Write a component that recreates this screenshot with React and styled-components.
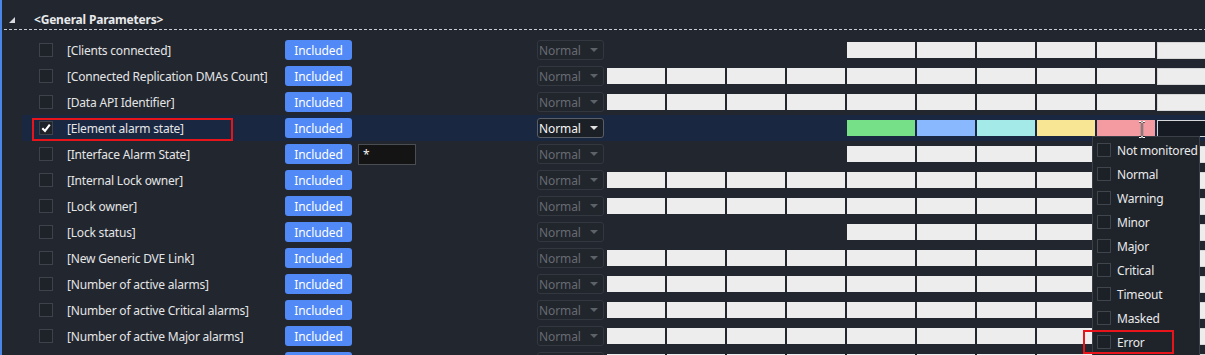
import React from "react";
import styled, { createGlobalStyle } from "styled-components";

const Global = createGlobalStyle`
  html, body { margin: 0; padding: 0; background: #22262e; overflow: hidden; }
  body { font-family: "Noto Sans", "Open Sans", sans-serif; }
`;

const Page = styled.div`
  position: relative;
  height: 355px;
  overflow: hidden;
  background: #22262e;
  border-left: 2px solid #4a86e8;
  display: flex;
  flex-direction: column;
`;

const GroupHeader = styled.div`
  flex: none;
  display: flex;
  align-items: center;
  height: 30px;
  padding-left: 5px;
  margin-left: 2px;
  gap: 19px;
  background-image: repeating-linear-gradient(to right, #c9ccd1 0 3px, transparent 3px 5px);
  background-size: 100% 1px;
  background-repeat: no-repeat;
  background-position: 0 100%;
  padding-top: 10px;
  padding-bottom: 1px;
  box-sizing: border-box;
`;

const Title = styled.span`
  color: #e8e9eb;
  font-size: 12px;
  font-weight: 700;
  letter-spacing: -0.2px;
  line-height: 16px;
`;

const Rows = styled.div`
  flex: none;
  display: flex;
  flex-direction: column;
  padding-top: 7px;
  padding-left: 20px;
`;

const Row = styled.div`
  display: flex;
  align-items: center;
  height: 26px;
  flex: none;
  padding-left: 17px;
  background: ${(p) => (p.$selected ? "#1a2741" : "transparent")};
`;

const Check = styled.span`
  width: 14px;
  height: 14px;
  box-sizing: border-box;
  border: 1px solid #3d424b;
  background: #1e2229;
  flex: none;
  margin-right: 14px;
  display: flex;
  align-items: center;
  justify-content: center;
`;

const Label = styled.span`
  width: 218px;
  flex: none;
  color: #e4e5e7;
  font-size: 12px;
  letter-spacing: -0.2px;
  white-space: nowrap;
  overflow: hidden;
`;

const IncludedButton = styled.span`
  width: 67px;
  height: 20px;
  flex: none;
  border-radius: 3px;
  background: #5189f7;
  color: #ffffff;
  font-size: 12px;
  letter-spacing: -0.1px;
  display: flex;
  align-items: center;
  justify-content: center;
`;

const FilterSlot = styled.span`
  width: 185px;
  flex: none;
  display: flex;
  padding-left: 6px;
  box-sizing: border-box;
`;

const FilterInput = styled.span`
  width: 58px;
  height: 21px;
  box-sizing: border-box;
  border: 1px solid #4a4d52;
  background: #141414;
  color: #f0f0f0;
  font-size: 12px;
  padding: 1px 4px;
`;

const Select = styled.span`
  width: 67px;
  height: 20px;
  flex: none;
  box-sizing: border-box;
  margin-right: 3px;
  border-radius: 3px;
  border: 1px solid ${(p) => (p.$active ? "#5a5e66" : "#323740")};
  background: ${(p) => (p.$active ? "#1b1f26" : "#21252c")};
  color: ${(p) => (p.$active ? "#f4f4f4" : "#676b72")};
  font-size: 12px;
  letter-spacing: -0.1px;
  display: flex;
  align-items: center;
  justify-content: space-between;
  padding: 0 5px 0 1px;
`;

const Caret = styled.span`
  width: 0;
  height: 0;
  border-left: 4px solid transparent;
  border-right: 4px solid transparent;
  border-top: 4px solid ${(p) => (p.$active ? "#e0e0e0" : "#5d6168")};
`;

const Cells = styled.div`
  display: flex;
  gap: 2px;
  flex: none;
`;

const Cell = styled.span`
  width: ${(p) => p.$w}px;
  height: 16px;
  flex: none;
  box-sizing: border-box;
  background: ${(p) => p.$color};
  ${(p) => (p.$bordered ? `border: 1px solid ${p.$borderColor}; height: 17px;` : "")}
`;

const Overlay = styled.div`
  position: absolute;
  left: 1090px;
  top: 136px;
  width: 108px;
  height: 240px;
  box-sizing: border-box;
  background: #1f232a;
  border: 1px solid #3a3f48;
  padding-top: 1px;
  display: flex;
  flex-direction: column;
`;

const Option = styled.div`
  height: 24px;
  display: flex;
  align-items: center;
  padding-left: 4px;
  gap: 6px;
  color: #e9eaec;
  font-size: 12px;
  letter-spacing: -0.2px;
  white-space: nowrap;
`;

const OptionBox = styled.span`
  width: 14px;
  height: 14px;
  box-sizing: border-box;
  border: 1px solid #3f444d;
  background: #1c2027;
  flex: none;
`;

const Mark = styled.div`
  position: absolute;
  left: ${(p) => p.$x}px;
  top: ${(p) => p.$y}px;
  width: ${(p) => p.$w}px;
  height: ${(p) => p.$h}px;
  box-sizing: border-box;
  border: 2px solid #e8141c;
  pointer-events: none;
`;

const Cursor = styled.svg`
  position: absolute;
  left: 1136px;
  top: 121px;
`;

const ExpandGlyph = () => (
  <svg width="6" height="6" viewBox="0 0 6 6">
    <polygon points="6,0 6,6 0,6" fill="#d8dadd" />
  </svg>
);

const CheckMark = () => (
  <svg width="10" height="10" viewBox="0 0 10 10">
    <path d="M1.3 5.2 L4 8 L8.8 1.6" stroke="#ffffff" strokeWidth="2.1" fill="none" />
  </svg>
);

const WIDTHS = [58, 58, 58, 58, 68, 58, 58, 58, 58];
const ALARM = ["#75e088", "#8ab8fe", "#a4eae8", "#f8e695", "#f49aa1"];
const LIGHT = "#ededed";

const rows = [
  { label: "[Clients connected]", short: true },
  { label: "[Connected Replication DMAs Count]" },
  { label: "[Data API Identifier]" },
  { label: "[Element alarm state]", selected: true, short: true },
  { label: "[Interface Alarm State]", short: true, filter: "*" },
  { label: "[Internal Lock owner]" },
  { label: "[Lock owner]" },
  { label: "[Lock status]", short: true },
  { label: "[New Generic DVE Link]" },
  { label: "[Number of active alarms]" },
  { label: "[Number of active Critical alarms]" },
  { label: "[Number of active Major alarms]" },
  { label: "", stub: true },
];

const options = ["Not monitored", "Normal", "Warning", "Minor", "Major", "Critical", "Timeout", "Masked", "Error"];

function CellStrip({ row }) {
  return (
    <Cells>
      {WIDTHS.map((w, i) => {
        let color = LIGHT;
        if (i < 4 && row.short) color = "transparent";
        if (row.selected && i >= 4) color = ALARM[i - 4];
        return <Cell key={i} $w={w} $color={color} />;
      })}
      <Cell
        $w={60}
        $bordered
        $color={row.selected ? "#161a22" : LIGHT}
        $borderColor={row.selected ? "#d4d6da" : "#d6d6d6"}
      />
    </Cells>
  );
}

export default function App() {
  return (
    <>
      <Global />
      <Page>
        <GroupHeader>
          <ExpandGlyph />
          <Title>&lt;General Parameters&gt;</Title>
        </GroupHeader>
        <Rows>
          {rows.map((row, idx) => (
            <Row key={idx} $selected={row.selected}>
              <Check>{row.selected && <CheckMark />}</Check>
              <Label>{row.label}</Label>
              <IncludedButton>{row.stub ? "" : "Included"}</IncludedButton>
              <FilterSlot>{row.filter && <FilterInput>{row.filter}</FilterInput>}</FilterSlot>
              <Select $active={row.selected}>
                {row.stub ? "" : "Normal"}
                <Caret $active={row.selected} />
              </Select>
              <CellStrip row={row} />
            </Row>
          ))}
        </Rows>
        <Overlay>
          {options.map((o) => (
            <Option key={o}>
              <OptionBox />
              {o}
            </Option>
          ))}
        </Overlay>
        <Mark $x={30} $y={118} $w={201} $h={23} />
        <Mark $x={1081} $y={330} $w={91} $h={24} />
        <Cursor width="8" height="17" viewBox="0 0 8 17">
          <path d="M1 0.5 H3 Q4 0.5 4 2 V15 Q4 16.5 3 16.5 H1 M7 0.5 H5 Q4 0.5 4 2 M4 15 Q4 16.5 5 16.5 H7" stroke="#000" strokeWidth="2.2" fill="none" />
          <path d="M1 0.5 H3 Q4 0.5 4 2 V15 Q4 16.5 3 16.5 H1 M7 0.5 H5 Q4 0.5 4 2 M4 15 Q4 16.5 5 16.5 H7" stroke="#fff" strokeWidth="1" fill="none" />
        </Cursor>
      </Page>
    </>
  );
}
